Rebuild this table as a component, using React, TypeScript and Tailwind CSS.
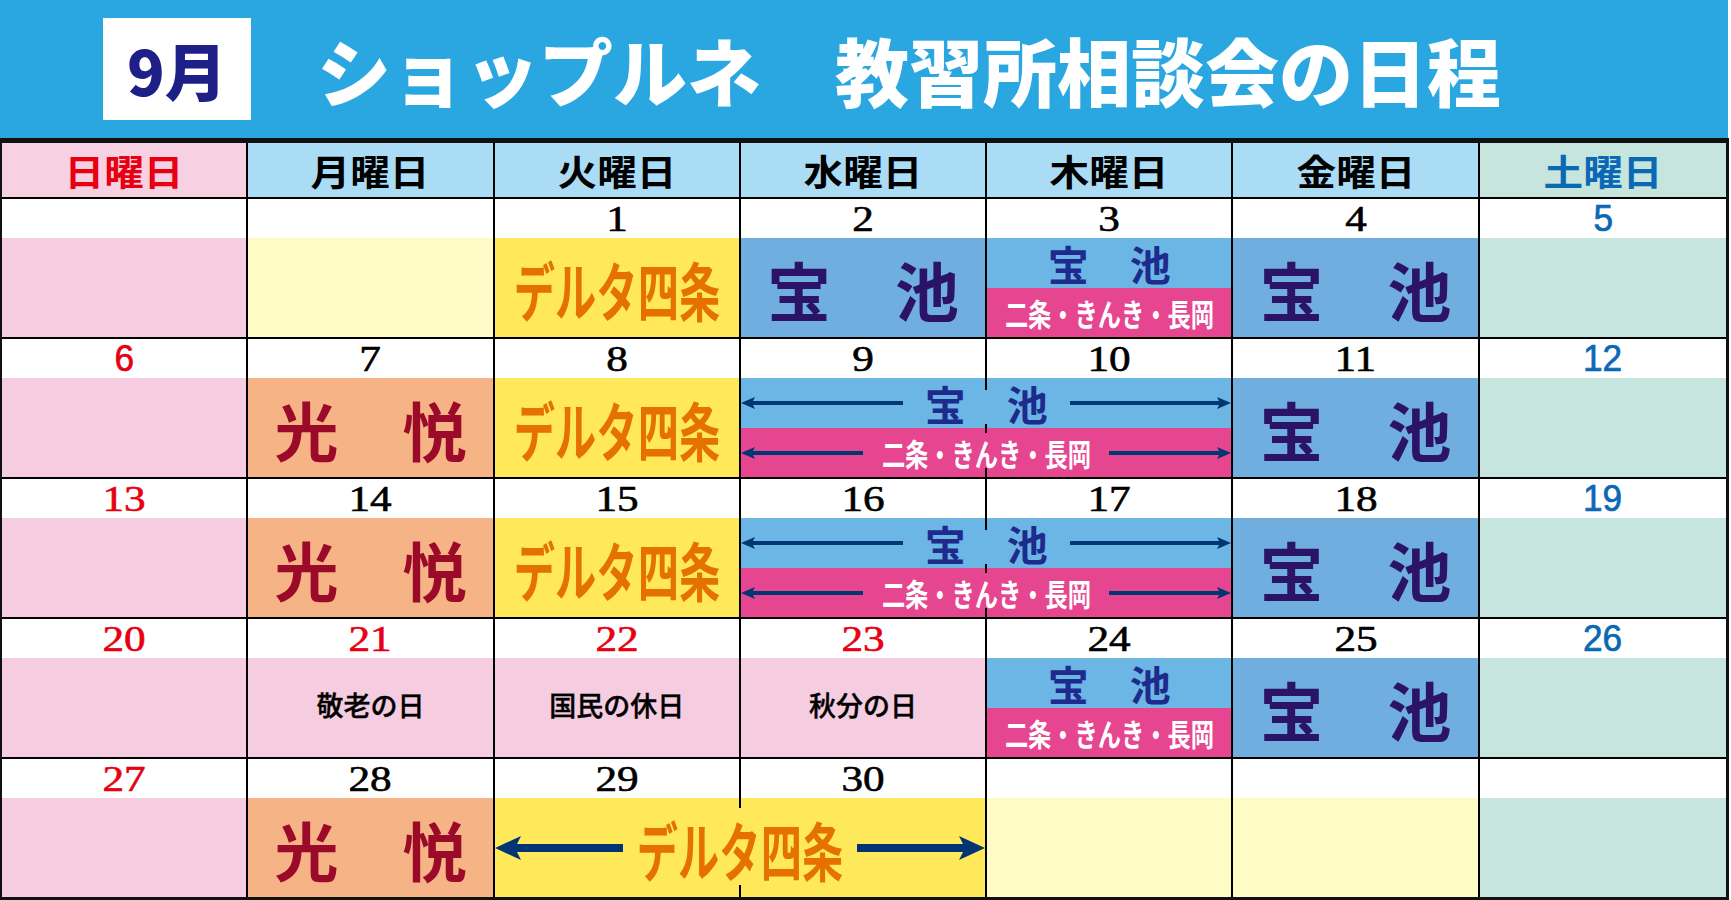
import React from "react";

const NAVY = "#003673";

function Arrow({ dir, big }: { dir: "left" | "right"; big?: boolean }) {
  const head = big ? (
    <svg width="26" height="24" viewBox="0 0 26 24" className="block shrink-0">
      <polygon points={dir === "left" ? "0,12 26,0 20,12 26,24" : "26,12 0,0 6,12 0,24"} fill={NAVY} />
    </svg>
  ) : (
    <svg width="14" height="12" viewBox="0 0 14 12" className="block shrink-0">
      <polygon points={dir === "left" ? "0,6 14,0 11,6 14,12" : "14,6 0,0 3,6 0,12"} fill={NAVY} />
    </svg>
  );
  if (dir === "left") {
    return (
      <div className="flex flex-1 items-center">
        {head}
        <div className={big ? "h-[8px] -ml-[8px] flex-1 bg-[#003673]" : "h-[4px] -ml-[4px] flex-1 bg-[#003673]"} />
      </div>
    );
  }
  return (
    <div className="flex flex-1 items-center">
      <div className={big ? "h-[8px] -mr-[8px] flex-1 bg-[#003673]" : "h-[4px] -mr-[4px] flex-1 bg-[#003673]"} />
      {head}
    </div>
  );
}

type DateKind = "black" | "red" | "redSans" | "blue" | "none";

function DateCell({ n, kind, last }: { n: string; kind: DateKind; last?: boolean }) {
  let cls = "";
  if (kind === "black") cls = "font-['Liberation_Serif',serif] text-[36px] text-black scale-x-[1.2] [-webkit-text-stroke:0.6px_black]";
  if (kind === "red") cls = "font-['Liberation_Serif',serif] text-[36px] text-[#e60012] scale-x-[1.2] [-webkit-text-stroke:0.6px_#e60012]";
  if (kind === "redSans") cls = "font-['Liberation_Sans',sans-serif] text-[37px] text-[#e60012] scale-x-[0.95] [-webkit-text-stroke:0.7px_#e60012]";
  if (kind === "blue") cls = "font-['Liberation_Sans',sans-serif] text-[37px] text-[#0a68b5] scale-x-[0.95] [-webkit-text-stroke:0.7px_#0a68b5]";
  return (
    <div className={last ? "flex items-center justify-center bg-white" : "flex items-center justify-center bg-white border-r-2 border-black"}>
      <span className={"inline-block leading-none " + cls}>{n}</span>
    </div>
  );
}

const JP = "font-['Noto_Sans_CJK_JP',sans-serif]";

function Plain({ bg, last }: { bg: string; last?: boolean }) {
  return <div className={(last ? "" : "border-r-2 border-black ") + bg} />;
}

function Takaike({ last }: { last?: boolean }) {
  return (
    <div className={(last ? "" : "border-r-2 border-black ") + "flex items-center justify-center bg-[#70aee0]"}>
      <span className={JP + " inline-block whitespace-nowrap text-[64px] font-bold leading-none text-[#2b1468]"}>宝　池</span>
    </div>
  );
}

function Kouetsu() {
  return (
    <div className="flex items-center justify-center border-r-2 border-black bg-[#f5b386]">
      <span className={JP + " inline-block whitespace-nowrap text-[64px] font-bold leading-none text-[#9c0a2a]"}>光　悦</span>
    </div>
  );
}

function DeltaText() {
  return (
    <div className="flex w-[206px] shrink-0 justify-center">
      <span className={JP + " inline-block whitespace-nowrap text-[64px] font-bold leading-none text-[#e57200] scale-x-[0.645]"}>
        デルタ四条
      </span>
    </div>
  );
}

function Delta() {
  return (
    <div className="flex items-center justify-center border-r-2 border-black bg-[#ffe95b]">
      <DeltaText />
    </div>
  );
}

function NijoText() {
  return (
    <div className="flex w-[210px] shrink-0 justify-center">
      <span className={JP + " inline-block whitespace-nowrap text-[31px] font-bold leading-none text-white scale-x-[0.75]"}>
        二条・きんき・長岡
      </span>
    </div>
  );
}

function SmallTakaike() {
  return <span className={JP + " inline-block shrink-0 whitespace-nowrap text-[41px] font-bold leading-none text-[#1e2b8c]"}>宝　池</span>;
}

function Split() {
  return (
    <div className="flex flex-col border-r-2 border-black">
      <div className="flex h-[50px] items-center justify-center bg-[#6cb6e5]">
        <SmallTakaike />
      </div>
      <div className="flex flex-1 items-center justify-center bg-[#e5468f]">
        <NijoText />
      </div>
    </div>
  );
}

function SpanTakaike() {
  return (
    <div className="relative col-span-2 flex flex-col border-r-2 border-black">
      <div className="flex h-[50px] items-center gap-[22px] bg-[#6cb6e5]">
        <Arrow dir="left" />
        <SmallTakaike />
        <Arrow dir="right" />
      </div>
      <div className="flex flex-1 items-center gap-[18px] bg-[#e5468f]">
        <Arrow dir="left" />
        <NijoText />
        <Arrow dir="right" />
      </div>
      <div className="absolute left-1/2 top-0 h-[12px] w-[2px] -translate-x-1/2 bg-black" />
      <div className="absolute left-1/2 top-[46px] h-[9px] w-[2px] -translate-x-1/2 bg-black" />
      <div className="absolute bottom-0 left-1/2 h-[9px] w-[2px] -translate-x-1/2 bg-black" />
    </div>
  );
}

function SpanDelta() {
  return (
    <div className="relative col-span-2 flex items-center gap-[14px] border-r-2 border-black bg-[#ffe95b]">
      <Arrow dir="left" big />
      <DeltaText />
      <Arrow dir="right" big />
      <div className="absolute left-1/2 top-0 h-[10px] w-[2px] -translate-x-1/2 bg-black" />
      <div className="absolute bottom-0 left-1/2 h-[12px] w-[2px] -translate-x-1/2 bg-black" />
    </div>
  );
}

function Holiday({ text }: { text: string }) {
  return (
    <div className="flex items-center justify-center border-r-2 border-black bg-[#f6cde0] pb-[6px]">
      <span className={JP + " inline-block whitespace-nowrap text-[27px] font-medium leading-none text-black [-webkit-text-stroke:0.4px_black]"}>{text}</span>
    </div>
  );
}

function Week({ children }: { children: React.ReactNode }) {
  return <div className="grid h-[140px] grid-cols-7 grid-rows-[39px_99px] border-t-2 border-black">{children}</div>;
}

const PINK = "bg-[#f6cde0]";
const LY = "bg-[#fffbc6]";
const MINT = "bg-[#c5e5de]";

export default function App() {
  return (
    <div className="h-[900px] w-[1731px] overflow-hidden bg-white">
      <div className="flex h-[138px] w-[1728px] items-center bg-[#2aa7e1]">
        <div className="ml-[103px] flex h-[102px] w-[148px] items-center justify-center bg-white">
          <span className={JP + " text-[62px] font-black leading-none text-[#1e2088]"}>9月</span>
        </div>
        <div className={JP + " ml-[66px] whitespace-nowrap text-[74px] font-black leading-none text-white"}>
          ショップルネ　教習所相談会の日程
        </div>
      </div>
      <div className="w-[1729px] border-b-[3px] border-l-2 border-r-[3px] border-t-[5px] border-[#111]">
        <div className={"grid h-[54px] grid-cols-7 " + JP}>
          <div className="flex items-center justify-center border-r-2 border-black bg-[#f7d0e1]">
            <span className="inline-block text-[36px] font-bold leading-none text-[#e60012] scale-x-[1.1]">日曜日</span>
          </div>
          {["月曜日", "火曜日", "水曜日", "木曜日", "金曜日"].map((d) => (
            <div key={d} className="flex items-center justify-center border-r-2 border-black bg-[#abdcf5]">
              <span className="inline-block text-[36px] font-bold leading-none text-black scale-x-[1.1]">{d}</span>
            </div>
          ))}
          <div className="flex items-center justify-center bg-[#c6e5dd]">
            <span className="inline-block text-[36px] font-bold leading-none text-[#0a68b5] scale-x-[1.1]">土曜日</span>
          </div>
        </div>

        <Week>
          <DateCell n="" kind="none" />
          <DateCell n="" kind="none" />
          <DateCell n="1" kind="black" />
          <DateCell n="2" kind="black" />
          <DateCell n="3" kind="black" />
          <DateCell n="4" kind="black" />
          <DateCell n="5" kind="blue" last />
          <Plain bg={PINK} />
          <Plain bg={LY} />
          <Delta />
          <Takaike />
          <Split />
          <Takaike />
          <Plain bg={MINT} last />
        </Week>

        <Week>
          <DateCell n="6" kind="redSans" />
          <DateCell n="7" kind="black" />
          <DateCell n="8" kind="black" />
          <DateCell n="9" kind="black" />
          <DateCell n="10" kind="black" />
          <DateCell n="11" kind="black" />
          <DateCell n="12" kind="blue" last />
          <Plain bg={PINK} />
          <Kouetsu />
          <Delta />
          <SpanTakaike />
          <Takaike />
          <Plain bg={MINT} last />
        </Week>

        <Week>
          <DateCell n="13" kind="red" />
          <DateCell n="14" kind="black" />
          <DateCell n="15" kind="black" />
          <DateCell n="16" kind="black" />
          <DateCell n="17" kind="black" />
          <DateCell n="18" kind="black" />
          <DateCell n="19" kind="blue" last />
          <Plain bg={PINK} />
          <Kouetsu />
          <Delta />
          <SpanTakaike />
          <Takaike />
          <Plain bg={MINT} last />
        </Week>

        <Week>
          <DateCell n="20" kind="red" />
          <DateCell n="21" kind="red" />
          <DateCell n="22" kind="red" />
          <DateCell n="23" kind="red" />
          <DateCell n="24" kind="black" />
          <DateCell n="25" kind="black" />
          <DateCell n="26" kind="blue" last />
          <Plain bg={PINK} />
          <Holiday text="敬老の日" />
          <Holiday text="国民の休日" />
          <Holiday text="秋分の日" />
          <Split />
          <Takaike />
          <Plain bg={MINT} last />
        </Week>

        <Week>
          <DateCell n="27" kind="red" />
          <DateCell n="28" kind="black" />
          <DateCell n="29" kind="black" />
          <DateCell n="30" kind="black" />
          <DateCell n="" kind="none" />
          <DateCell n="" kind="none" />
          <DateCell n="" kind="none" last />
          <Plain bg={PINK} />
          <Kouetsu />
          <SpanDelta />
          <Plain bg={LY} />
          <Plain bg={LY} />
          <Plain bg={MINT} last />
        </Week>
      </div>
    </div>
  );
}
